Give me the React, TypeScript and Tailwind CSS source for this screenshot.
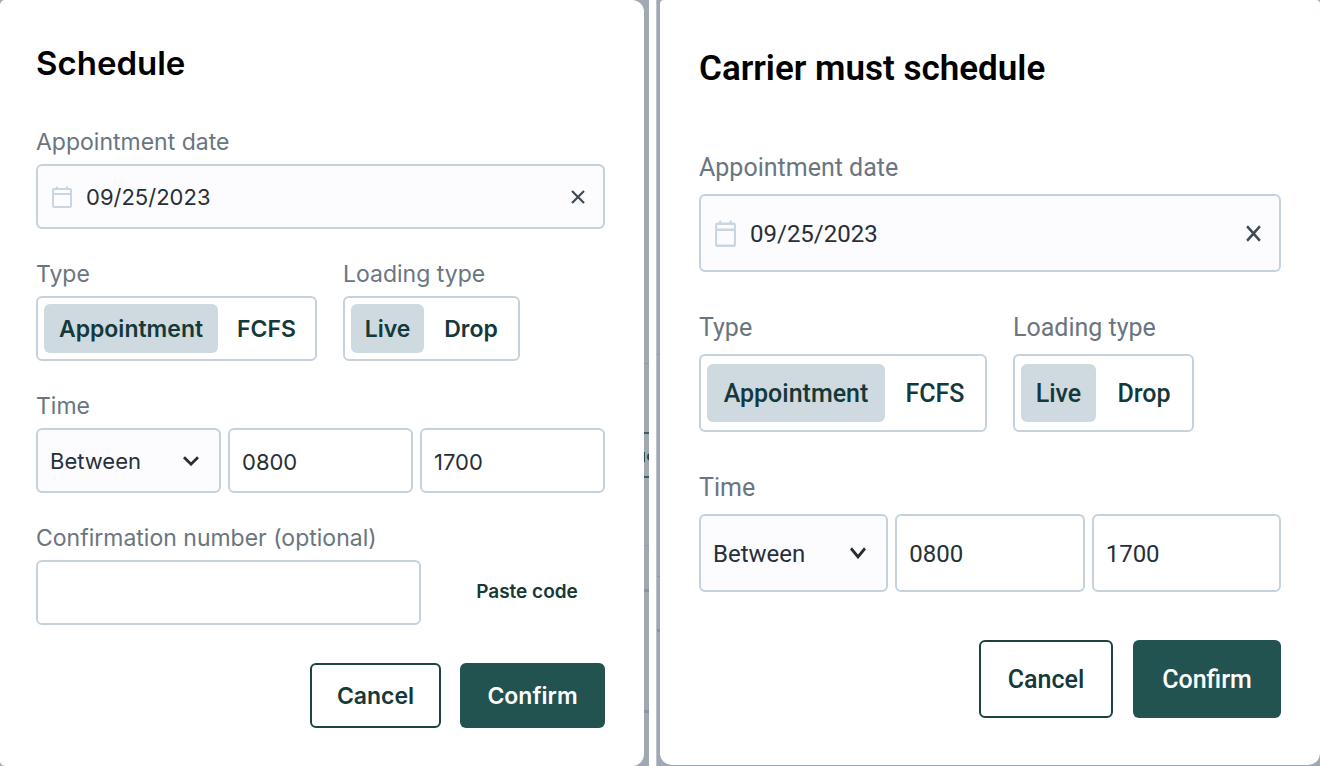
import { useState, type ReactNode } from 'react';

type Size = 'regular' | 'tall';

const fieldBorder = 'border-2 border-[#c5d2de] rounded-md';

const styles = {
  regular: {
    font: 'font-["Inter",sans-serif]',
    text: 'text-[22px]',
    bold: 'pt-0.5 text-[23px] font-semibold',
    control: 'h-[65px]',
    label: 'text-[23px] leading-6',
    field: 'gap-[10px]',
    segment: 'py-1.5 pl-1.5',
    wide: 'w-[281px]',
    wideActive: 'w-[174px]',
    narrow: 'w-[177px]',
    narrowActive: 'w-[73px]',
    cancel: 'w-[131px]',
    confirm: 'w-[145px]',
    calendar: 'h-[22px] w-5',
    cross: 'h-[14px] w-[14px]',
    chevron: 'h-[10px] w-4',
  },
  tall: {
    font: 'font-["Roboto",sans-serif]',
    text: 'text-[24px]',
    bold: 'pt-0.5 text-[25px] font-medium',
    control: 'h-[78px]',
    label: 'text-[25px] leading-7',
    field: 'gap-3',
    segment: 'py-2 pl-1.5',
    wide: 'w-[288px]',
    wideActive: 'w-[178px]',
    narrow: 'w-[181px]',
    narrowActive: 'w-[75px]',
    cancel: 'w-[134px]',
    confirm: 'w-[148px]',
    calendar: 'h-[27px] w-[21px]',
    cross: 'h-[17px] w-[15px]',
    chevron: 'h-3 w-4',
  },
};

function CalendarIcon({ className }: { className: string }) {
  return (
    <svg viewBox="0 0 20 22" preserveAspectRatio="none" className={className} fill="none" stroke="#c9d5e0" strokeWidth="2" aria-hidden="true">
      <rect x="1" y="3" width="18" height="18" rx="1.2" />
      <path d="M1 8h18M5 0.5V3M15 0.5V3" />
    </svg>
  );
}

function CrossIcon({ className }: { className: string }) {
  return (
    <svg viewBox="0 0 14 14" preserveAspectRatio="none" className={className} stroke="#3f4a54" strokeWidth="2.2" aria-hidden="true">
      <path d="M1 1l12 12M13 1L1 13" />
    </svg>
  );
}

function ChevronIcon({ className }: { className: string }) {
  return (
    <svg viewBox="0 0 16 10" preserveAspectRatio="none" className={className} fill="none" stroke="#252d35" strokeWidth="2.7" aria-hidden="true">
      <path d="M1 1.2l7 7 7-7" />
    </svg>
  );
}

function DateField({ id, size }: { id: string; size: Size }) {
  const s = styles[size];
  const [value, setValue] = useState('09/25/2023');
  return (
    <div className={`flex flex-col ${s.field}`}>
      <label htmlFor={id} className={`${s.label} text-[#6a7580]`}>Appointment date</label>
      <div className={`flex items-center bg-[#fcfcfe] pr-[18px] pl-3.5 ${s.control} ${fieldBorder}`}>
        <CalendarIcon className={`shrink-0 ${s.calendar}`} />
        <input
          id={id}
          value={value}
          onChange={(e) => setValue(e.target.value)}
          className={`ml-3.5 min-w-0 flex-1 bg-transparent pt-0.5 text-[#272f38] outline-none ${s.text}`}
        />
        <button type="button" aria-label="Clear date" onClick={() => setValue('')}>
          <CrossIcon className={s.cross} />
        </button>
      </div>
    </div>
  );
}

function Segmented({ title, options, size, wide }: { title: string; options: [string, string]; size: Size; wide?: boolean }) {
  const s = styles[size];
  const [active, setActive] = useState(options[0]);
  return (
    <div className={`flex flex-col ${s.field}`}>
      <span className={`${s.label} text-[#6a7580]`}>{title}</span>
      <div role="group" aria-label={title} className={`flex ${s.control} ${s.segment} ${wide ? s.wide : s.narrow} ${fieldBorder}`}>
        {options.map((option, i) => (
          <button
            key={option}
            type="button"
            aria-pressed={active === option}
            onClick={() => setActive(option)}
            className={`rounded-md text-[#15383a] ${s.bold} ${active === option ? 'bg-[#cedadf]' : ''} ${
              i === 0 ? (wide ? s.wideActive : s.narrowActive) : 'flex-1'
            }`}
          >
            {option}
          </button>
        ))}
      </div>
    </div>
  );
}

function TimeField({ id, size }: { id: string; size: Size }) {
  const s = styles[size];
  const box = `w-full min-w-0 pt-0.5 pl-3 text-[#272f38] outline-none ${s.control} ${s.text} ${fieldBorder}`;
  return (
    <div className={`flex flex-col ${s.field}`}>
      <label htmlFor={id} className={`${s.label} text-[#6a7580]`}>Time</label>
      <div className="grid grid-cols-3 gap-[7px]">
        <div className="grid items-center">
          <select id={id} className={`col-start-1 row-start-1 appearance-none bg-[#fcfcfe] ${box}`}>
            <option>Between</option>
            <option>At</option>
          </select>
          <ChevronIcon className={`pointer-events-none col-start-1 row-start-1 mr-[22px] justify-self-end ${s.chevron}`} />
        </div>
        <input aria-label="Start time" defaultValue="0800" className={box} />
        <input aria-label="End time" defaultValue="1700" className={box} />
      </div>
    </div>
  );
}

function Actions({ size, className }: { size: Size; className: string }) {
  const s = styles[size];
  return (
    <div className={`flex justify-end ${className}`}>
      <button type="button" className={`rounded-md border-2 border-[#1c4343] text-[#15383a] ${s.control} ${s.bold} ${s.cancel}`}>Cancel</button>
      <button type="button" className={`rounded-md bg-[#225351] text-white ${s.control} ${s.bold} ${s.confirm}`}>Confirm</button>
    </div>
  );
}

function Backdrop({ children, className }: { children: ReactNode; className: string }) {
  return <div className={`relative bg-[#a0a9b3] ${className}`}>{children}</div>;
}

export default function App() {
  return (
    <main className="grid min-h-screen grid-cols-[649fr_664fr] gap-[7px] bg-white">
      <Backdrop className={`grid pr-[5px] ${styles.regular.font}`}>
        <div aria-hidden="true" className="absolute top-0 right-0 h-full w-[5px] overflow-hidden">
          <div className="absolute top-[363px] h-px w-full bg-[#8f98a6]" />
          <div className="absolute top-[432px] h-[46px] w-full border-y-2 border-[#3c5c61]" />
          <div className="absolute top-[453px] left-[3px] size-2 rounded-full bg-[#27484d]" />
          <div className="absolute top-[452px] h-[10px] w-px bg-[#27484d]" />
          <div className="absolute top-[545px] h-px w-full bg-[#959eaa]" />
          <div className="absolute top-[589px] h-[3px] w-full bg-[#8c94a4]" />
          <div className="absolute top-[710px] h-[3px] w-full bg-[#8c94a4]" />
        </div>
        <section className="relative flex flex-col rounded-l-[5px] rounded-r-xl bg-white pt-[43px] pr-[39px] pb-[38px] pl-9">
          <h2 className="mb-[47px] text-[33px] leading-10 font-semibold text-black">Schedule</h2>
          <form className="flex flex-col gap-[33px]" onSubmit={(e) => e.preventDefault()}>
            <DateField id="date-a" size="regular" />
            <div className="flex gap-[26px]">
              <Segmented title="Type" options={['Appointment', 'FCFS']} size="regular" wide />
              <Segmented title="Loading type" options={['Live', 'Drop']} size="regular" />
            </div>
            <TimeField id="time-a" size="regular" />
            <div className="flex flex-col gap-[10px]">
              <label htmlFor="confirmation" className="text-[23px] leading-6 text-[#6a7580]">Confirmation number (optional)</label>
              <div className="grid grid-cols-[385fr_156fr] gap-7">
                <input id="confirmation" className={`h-[65px] w-full min-w-0 px-3 text-[22px] text-[#272f38] outline-none ${fieldBorder}`} />
                <button type="button" className="text-[19px] font-semibold text-[#15383a]">Paste code</button>
              </div>
            </div>
            <Actions size="regular" className="mt-[5px] gap-[19px]" />
          </form>
        </section>
      </Backdrop>

      <Backdrop className={`grid pb-px pl-1 ${styles.tall.font}`}>
        <div aria-hidden="true" className="absolute top-0 left-0 h-full w-1 border-l border-[#bcc3ca]">
          <div className="absolute top-[354px] h-px w-full bg-[#8f98a6]" />
          <div className="absolute top-[576px] h-px w-full bg-[#8f98a6]" />
          <div className="absolute top-[629px] h-[3px] w-full bg-[#8a92a4]" />
        </div>
        <section className="relative flex flex-col rounded-xl rounded-t-[4px] bg-white px-[39px] pt-[45px] pb-[46px]">
          <h2 className="mb-[61px] text-[35px] leading-[48px] font-semibold text-black">Carrier must schedule</h2>
          <form className="flex flex-col gap-[42px]" onSubmit={(e) => e.preventDefault()}>
            <DateField id="date-b" size="tall" />
            <div className="flex gap-[26px]">
              <Segmented title="Type" options={['Appointment', 'FCFS']} size="tall" wide />
              <Segmented title="Loading type" options={['Live', 'Drop']} size="tall" />
            </div>
            <TimeField id="time-b" size="tall" />
            <Actions size="tall" className="mt-1.5 gap-5" />
          </form>
        </section>
      </Backdrop>
    </main>
  );
}
